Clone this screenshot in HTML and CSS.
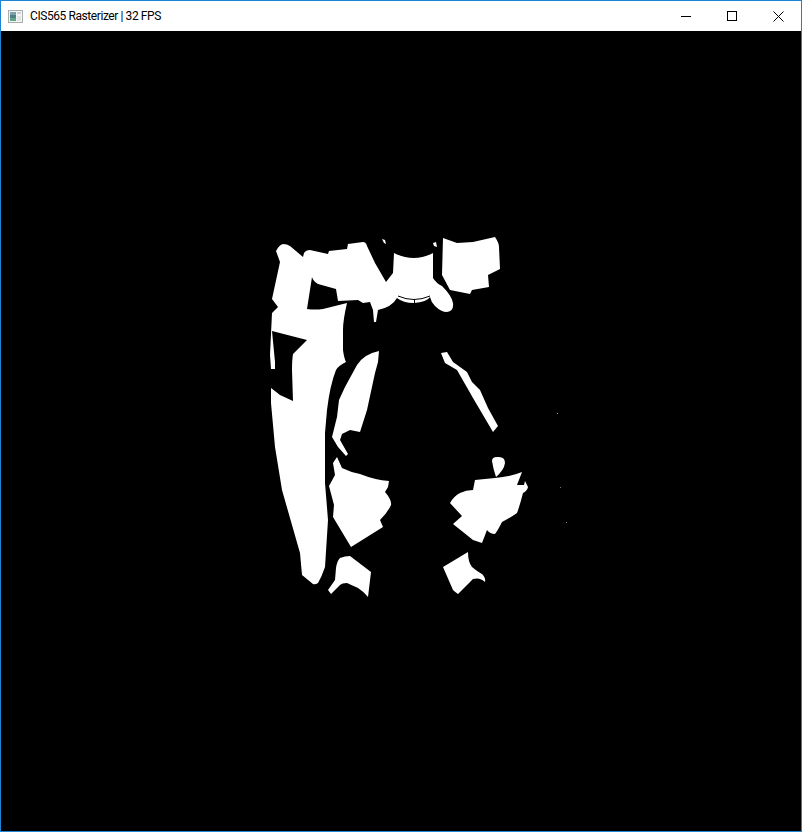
FILE: index.html
```html
<!DOCTYPE html>
<html lang="en">
<head>
    <meta charset="UTF-8">
    <meta name="viewport" content="width=device-width, initial-scale=1.0">
    <title>CIS565 Rasterizer</title>
    <link rel="stylesheet" href="styles.css">
</head>
<body>
    <div class="app-window">
        <div class="title-bar">
            <svg class="app-icon" width="15" height="13" viewBox="0 0 15 13">
                <rect x="0.5" y="0.5" width="14" height="12" fill="#f4f6f6" stroke="#a9adad"/>
                <rect x="2" y="2" width="6" height="9" fill="#4f7f83"/>
                <rect x="2" y="2" width="6" height="3" fill="#7d9fb0"/>
                <rect x="2" y="8" width="6" height="3" fill="#5fa884"/>
                <rect x="9" y="2" width="4" height="2" fill="#c9d3d3"/>
                <rect x="9" y="6" width="4" height="5" fill="#dfe6e4"/>
            </svg>
            <span class="title-text">CIS565 Rasterizer | 32 FPS</span>
            <div class="window-controls">
                <div class="control-btn">
                    <svg width="10" height="10" viewBox="0 0 10 10"><path d="M0 5.5H10" stroke="#000" fill="none"/></svg>
                </div>
                <div class="control-btn">
                    <svg width="10" height="10" viewBox="0 0 10 10"><rect x="0.5" y="0.5" width="9" height="9" stroke="#000" fill="none"/></svg>
                </div>
                <div class="control-btn">
                    <svg width="11" height="11" viewBox="0 0 11 11"><path d="M0.5 0.5L10.5 10.5M10.5 0.5L0.5 10.5" stroke="#000" fill="none"/></svg>
                </div>
            </div>
        </div>
        <div class="canvas-area">
            <svg class="render" width="800" height="800" viewBox="1 31 800 800">
                <!-- left shoulder, torso and long leg -->
                <path d="M276 251Q279 245 283 244Q287 244 290 246L303 257L304 253Q306 250 310 250L328 254L329 251L347 249L348 244L363 242Q366 242 367 246L375 263L386 282L393 273L394 253Q414 263 433 253L433 278Q436 283 442 286Q452 296 453 303Q454 311 447 312Q441 312 435 306Q431 302 430 297Q427 302 414 303Q403 303 397 298Q392 307 378 310L376 322L374 322L373 310L370 302L363 303L358 300L338 301L336 289L318 284Q313 281 312 277L307 309Q315 310 323 309L347 303Q343 320 343 330L343 350Q344 358 346 362Q338 366 336 370Q330 385 327 410L325 433L325 483L328 520L325 567Q322 576 318 583Q315 585 313 584L302 575L300 553L292 525L282 490L275 447L271 403L271 388L280 395L293 401L292 370Q292 360 293 354L307 340L272 331L275 362L275 369L271 369L270 355L272 313L278 307L272 299L280 262Z"/>
                <!-- belt lines -->
                <path class="gap" d="M398 296Q414 303 430 296"/>
                <path class="gap" d="M414.5 299V303"/>
                <!-- right shoulder -->
                <path d="M443 238L457 243L473 242L495 237Q499 243 499 247L500 269L488 275L489 287L472 290L470 294L450 290L442 275Z"/>
                <!-- left forearm -->
                <path d="M357 365Q364 354 379 351L378 362L375 373L367 410L360 432L350 430L342 434L340 440L348 454L346 456L338 447L332 437L337 417L339 400L345 387Z"/>
                <!-- left hand -->
                <path d="M333 463L337 457L342 468Q350 472 360 474Q375 480 389 481L388 487L385 492Q392 500 391 505Q388 512 380 520L383 527L351 547L333 517L334 505L329 486L335 475Z"/>
                <!-- left foot -->
                <path d="M328 590L335 580L336 568Q337 561 340 558Q345 556 350 556L371 572L368 597Q363 591 358 588L347 583Q342 583 340 585L331 594Z"/>
                <!-- right arm -->
                <path d="M441 353L447 352L453 362L467 372L472 382L480 390L488 408L498 426L493 432L473 398L457 370L445 363Z"/>
                <!-- right hand -->
                <path d="M496 477Q493 468 492 461Q492 457 497 457Q505 456 505 463Q504 470 496 477Z"/>
                <path d="M475 480L495 478Q510 477 522 472L517 485L524 485L525 481L528 487Q527 491 523 493Q520 505 517 513Q510 518 502 522Q498 530 495 534Q490 534 487 530L482 543L473 540L453 524L462 516L450 503Q454 496 460 493Q466 490 473 490Z"/>
                <!-- right foot -->
                <path d="M443 567L468 552Q468 562 472 567Q478 572 482 574Q486 578 485 582Q480 577 473 579L458 594Q455 592 453 590Z"/>
                <!-- specks -->
                <path d="M382 239L385 240L386 244L384 243Z"/>
                <path d="M433 243L436 242L437 247L434 246Z"/>
                <rect x="557" y="413" width="1" height="1" fill="#999"/>
                <rect x="560" y="487" width="1" height="1" fill="#777"/>
                <rect x="566" y="522" width="1" height="1" fill="#888"/>
            </svg>
        </div>
    </div>
</body>
</html>
```

FILE: styles.css
```css
html, body {
    margin: 0;
    padding: 0;
    background: #000;
}

.app-window {
    width: 802px;
    height: 832px;
    box-sizing: border-box;
    border: 1px solid #1a85d6;
    display: flex;
    flex-direction: column;
}

.title-bar {
    height: 30px;
    background: #fff;
    display: flex;
    align-items: center;
    flex-shrink: 0;
}

.app-icon {
    margin-left: 7px;
}

.title-text {
    margin-left: 7px;
    font-family: "Roboto", "Open Sans", sans-serif;
    font-size: 12px;
    letter-spacing: -0.42px;
    color: #000;
    white-space: nowrap;
}

.window-controls {
    margin-left: auto;
    display: flex;
    height: 100%;
}

.control-btn {
    width: 46px;
    display: flex;
    align-items: center;
    justify-content: center;
}

.canvas-area {
    flex: 1;
    background: #000;
    overflow: hidden;
}

.render {
    display: block;
    fill: #fff;
}

.gap {
    fill: none;
    stroke: #000;
    stroke-width: 1;
}
```
